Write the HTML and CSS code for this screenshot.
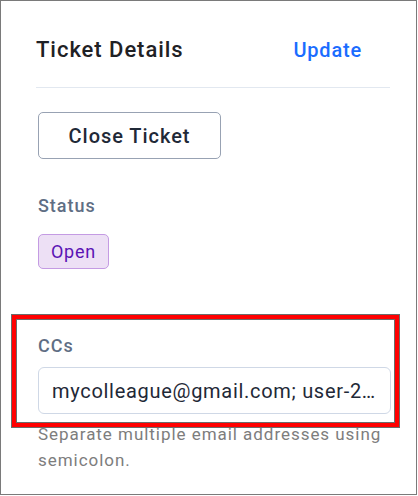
FILE: index.html
```html
<!DOCTYPE html>
<html lang="en">
<head>
    <meta charset="UTF-8">
    <meta name="viewport" content="width=device-width, initial-scale=1.0">
    <title>Ticket Details</title>
    <link rel="stylesheet" href="styles.css">
</head>
<body>
    <div class="panel">
        <div class="panel-header">
            <h2>Ticket Details</h2>
            <button class="link-btn">Update</button>
        </div>

        <button class="outline-btn">Close Ticket</button>

        <div class="field status-field">
            <label>Status</label>
            <span class="badge">Open</span>
        </div>

        <div class="field cc-field">
            <label for="ccInput">CCs</label>
            <input type="text" id="ccInput" value="mycolleague@gmail.com; user-2@example.com" readonly>
            <p class="hint">Separate multiple email addresses using semicolon.</p>
            <!-- highlight outline drawn over the CC block -->
            <div class="highlight"></div>
        </div>
    </div>
</body>
</html>
```

FILE: styles.css
```css
* {
    box-sizing: border-box;
}

body {
    margin: 0;
    font-family: Roboto, "Liberation Sans", Arial, sans-serif;
    letter-spacing: 0.06em;
    background-color: white;
}

.panel {
    width: 417px;
    height: 495px;
    border: 1px solid #7a7a7a;
    padding: 33px 26px 0 35px;
    overflow: hidden;
}

.panel-header {
    display: flex;
    justify-content: space-between;
    align-items: center;
    height: 54px;
    padding-bottom: 22px;
    border-bottom: 1px solid #e2e8f0;
}

.panel-header h2 {
    margin: 0;
    font-size: 22px;
    font-weight: 500;
    line-height: 32px;
    color: #1f2125;
}

.link-btn {
    background: none;
    border: none;
    padding: 0 28px 0 0;
    font-family: inherit;
    font-size: 20px;
    font-weight: 500;
    letter-spacing: 0.04em;
    line-height: 32px;
    color: #1a6cff;
    cursor: pointer;
}

.outline-btn {
    display: block;
    width: 183px;
    height: 47px;
    margin: 24px 0 0 2px;
    background-color: white;
    border: 1px solid #98a2b3;
    border-radius: 5px;
    font-family: inherit;
    font-size: 20px;
    font-weight: 500;
    letter-spacing: inherit;
    color: #1f2937;
    cursor: pointer;
}

.field {
    display: flex;
    flex-direction: column;
    align-items: flex-start;
    padding-left: 2px;
}

.field label {
    font-size: 18px;
    font-weight: 500;
    line-height: 24px;
    color: #5f6e84;
}

.status-field {
    margin-top: 35px;
    gap: 16px;
}

.badge {
    display: inline-flex;
    align-items: center;
    height: 35px;
    padding: 0 12px;
    background-color: #ede0f5;
    border: 1px solid #c49be3;
    border-radius: 5px;
    font-size: 18px;
    letter-spacing: 0.04em;
    color: #5b13b4;
}

.cc-field {
    position: relative;
    margin-top: 65px;
}

.cc-field input {
    width: 353px;
    height: 47px;
    margin-top: 9px;
    padding: 0 13px;
    border: 1px solid #cfd8e6;
    border-radius: 6px;
    font-family: inherit;
    font-size: 20px;
    letter-spacing: 0.035em;
    color: #1f2937;
    text-overflow: ellipsis;
    outline: none;
}

.hint {
    margin: 7px 0 0;
    font-size: 17px;
    line-height: 26px;
    color: #7d7d7d;
}

.highlight {
    position: absolute;
    left: -24px;
    top: -19px;
    width: 387px;
    height: 112px;
    border: 4px solid #ff0000;
    box-shadow: 0 0 0 1px #6b6b6b, inset 0 0 0 1px #6b6b6b;
    pointer-events: none;
}
```
